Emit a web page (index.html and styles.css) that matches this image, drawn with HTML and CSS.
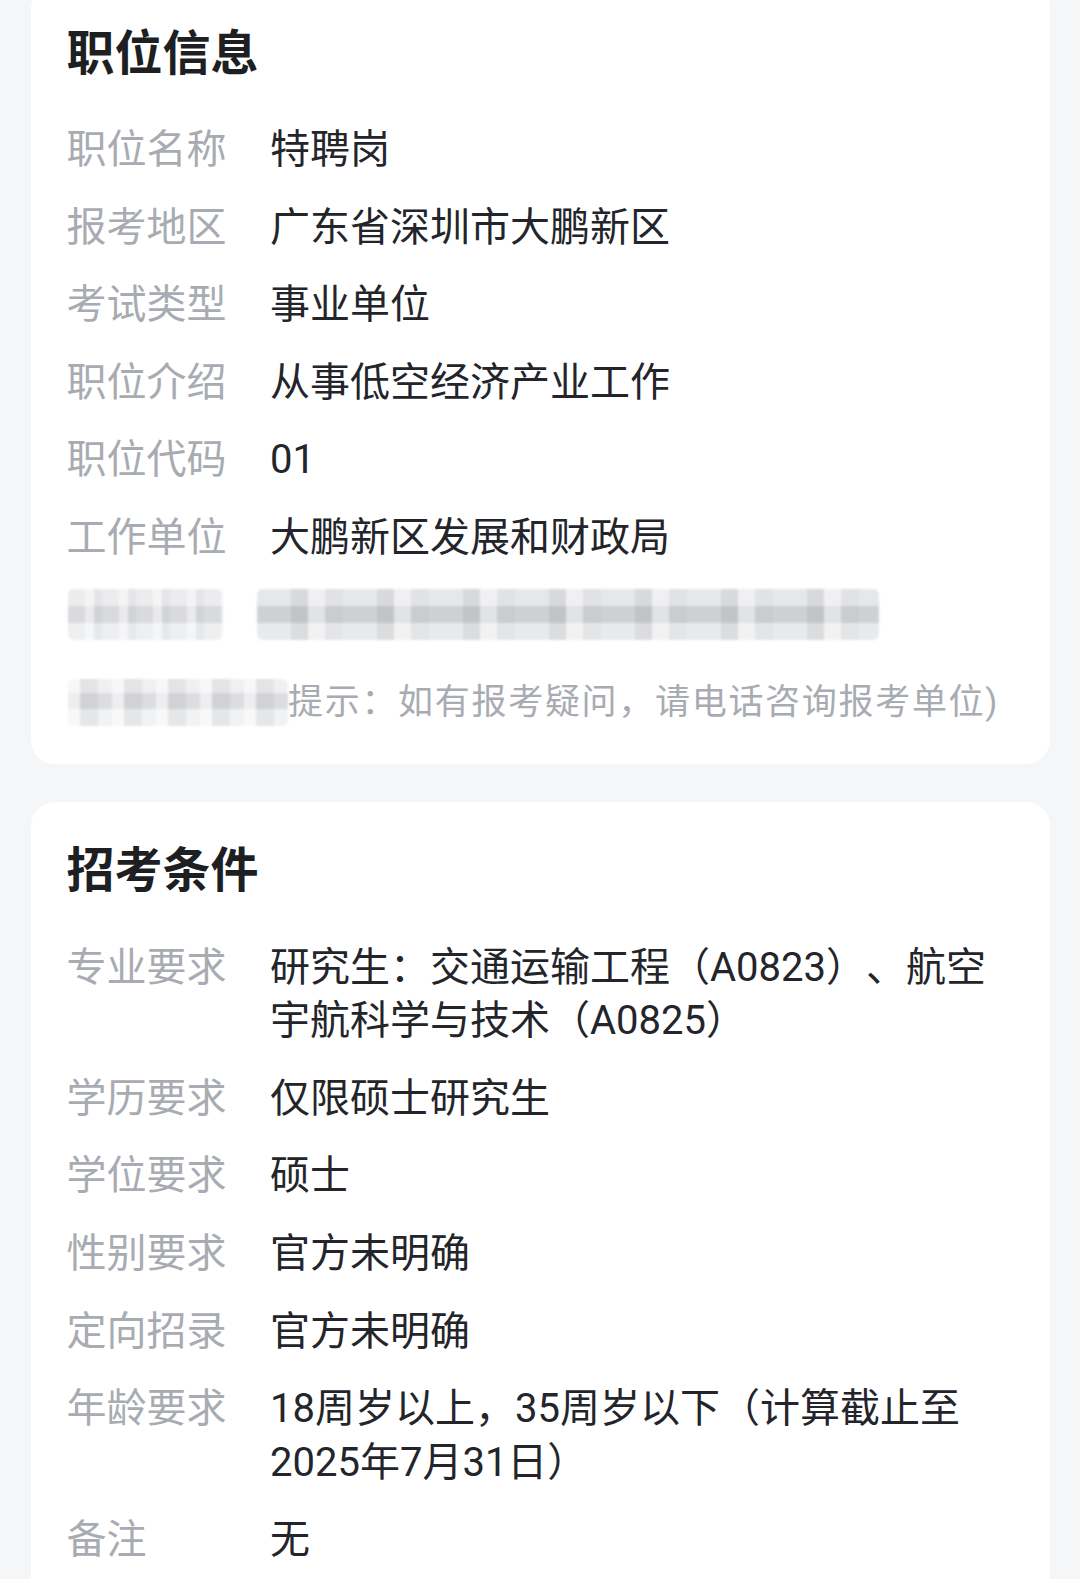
FILE: index.html
```html
<!DOCTYPE html>
<html lang="zh-CN">
<head>
<meta charset="utf-8">
<title>职位信息</title>
<link rel="stylesheet" href="styles.css">
</head>
<body>
<div class="page">
  <section class="card card-first">
    <h2 class="card-title">职位信息</h2>
    <div class="rows">
      <div class="label">职位名称</div><div class="value">特聘岗</div>
      <div class="label">报考地区</div><div class="value">广东省深圳市大鹏新区</div>
      <div class="label">考试类型</div><div class="value">事业单位</div>
      <div class="label">职位介绍</div><div class="value">从事低空经济产业工作</div>
      <div class="label">职位代码</div><div class="value">01</div>
      <div class="label">工作单位</div><div class="value">大鹏新区发展和财政局</div>
    </div>
    <div class="blur-row">
      <div class="blur blur-a"></div>
      <div class="blur blur-b"></div>
    </div>
    <div class="hint-row">
      <div class="blur blur-c"></div>
      <span class="hint">提示：如有报考疑问，请电话咨询报考单位)</span>
    </div>
  </section>

  <section class="card card-second">
    <h2 class="card-title">招考条件</h2>
    <div class="rows">
      <div class="label">专业要求</div><div class="value">研究生：交通运输工程（A0823）、航空宇航科学与技术（A0825）</div>
      <div class="label">学历要求</div><div class="value">仅限硕士研究生</div>
      <div class="label">学位要求</div><div class="value">硕士</div>
      <div class="label">性别要求</div><div class="value">官方未明确</div>
      <div class="label">定向招录</div><div class="value">官方未明确</div>
      <div class="label">年龄要求</div><div class="value">18周岁以上，35周岁以下（计算截止至2025年7月31日）</div>
      <div class="label">备注</div><div class="value">无</div>
    </div>
  </section>
</div>
</body>
</html>
```

FILE: styles.css
```css
html, body {
  margin: 0;
  padding: 0;
}
body {
  background: #f5f6f8;
  font-family: Roboto, "Noto Sans CJK SC", "Noto Sans", sans-serif;
  overflow: hidden;
  text-spacing-trim: space-all;
}
.page {
  padding: 0 30px 0 31px;
}
.card {
  background: #ffffff;
  border-radius: 24px;
  padding: 31.5px 37px 36px 35.5px;
}
.card-first {
  margin-top: -16px;
  margin-bottom: 38px;
}
.card-second {
  padding-bottom: 80px;
}
.card-title {
  margin: 0 0 40.5px 0;
  font-size: 48px;
  line-height: 67px;
  font-weight: 700;
  color: #1d1f23;
  font-family: "Noto Sans CJK SC", sans-serif;
}
.rows {
  display: grid;
  grid-template-columns: 203.5px 1fr;
  row-gap: 24px;
  font-size: 40px;
  line-height: 53.6px;
}
.label {
  color: #a8abb1;
}
.value {
  color: #23252a;
}
.blur-row {
  display: flex;
  margin-top: 24px;
  height: 51px;
  gap: 34px;
  padding-left: 1.5px;
}
.blur {
  height: 100%;
  filter: blur(1.2px);
  border-radius: 6px;
}
.blur-a {
  width: 155px;
  background:
    repeating-linear-gradient(90deg, rgba(255,255,255,0) 0 17px, rgba(255,255,255,0.45) 17px 26px, rgba(0,0,0,0.03) 26px 34px),
    linear-gradient(180deg, #ececee 0 17px, #d9dadd 17px 34px, #eeeff1 34px 51px);
}
.blur-b {
  width: 622px;
  background:
    repeating-linear-gradient(90deg, rgba(255,255,255,0) 0 34px, rgba(0,0,0,0.06) 34px 51px, rgba(255,255,255,0.4) 51px 68px, rgba(0,0,0,0.02) 68px 86px),
    linear-gradient(180deg, #e6e7e9 0 17px, #cfd0d3 17px 34px, #e9eaec 34px 51px);
}
.hint-row {
  display: flex;
  align-items: center;
  margin-top: 38px;
  height: 50px;
  padding-left: 1.5px;
}
.blur-c {
  width: 220px;
  height: 47px;
  flex: none;
  background:
    repeating-linear-gradient(90deg, rgba(255,255,255,0.5) 0 12px, rgba(0,0,0,0.05) 12px 30px, rgba(255,255,255,0) 30px 44px),
    linear-gradient(180deg, #f0f0f2 0 14px, #dcdde0 14px 30px, #f1f2f3 30px 47px);
}
.hint {
  font-size: 35px;
  line-height: 50px;
  letter-spacing: 1.7px;
  color: #a8abb1;
  white-space: nowrap;
}
```
